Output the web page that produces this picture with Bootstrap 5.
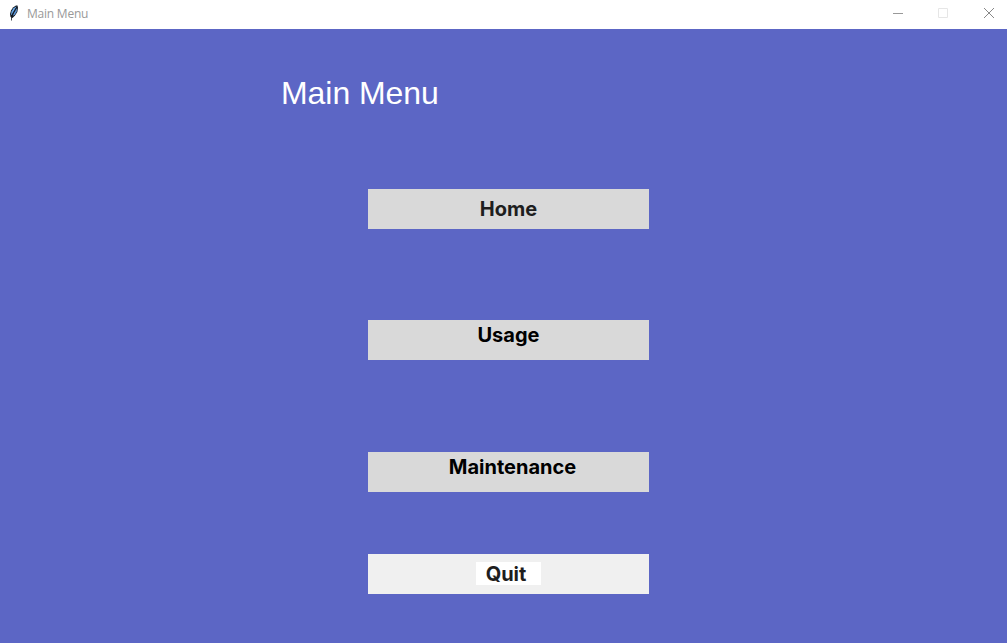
<!DOCTYPE html>
<html lang="en">
<head>
<meta charset="utf-8">
<meta name="viewport" content="width=device-width, initial-scale=1">
<title>Main Menu</title>
<link href="https://cdn.jsdelivr.net/npm/bootstrap@5.3.0/dist/css/bootstrap.min.css" rel="stylesheet">
<style>
body{background:#5c66c5}
.titlebar{height:29px;font:12px/27px "Open Sans",sans-serif;color:#999}
.titlebar .caption{letter-spacing:-.22px}
.feather{margin:5px 8px 0 9px}
.win-controls{gap:35px;padding-right:12px;padding-top:8px}
.heading{font:32px/36px "Liberation Sans",Arial,sans-serif;letter-spacing:-.05px;margin:46px 0 0 281px;color:#fff}
.menu{width:281px;margin-left:368px;margin-top:78px}
.menu .btn{height:40px;border:0;border-radius:0;background:#d9d9d9;padding:0;font:bold 20px/40px Inter,sans-serif;color:#000}
.menu .btn.raised{padding-bottom:10px;line-height:30px}
.menu .btn.wide-label{padding-left:8px}
.gap-a{margin-top:91px}.gap-b{margin-top:92px}.gap-c{margin-top:62px}
.menu .btn.home{color:#1e1e1e}
.menu .btn.quit{background:#f0f0f0;color:#1e1e1e;padding-bottom:1px}
.quit span{width:65px;height:23px;line-height:24px;padding-right:5px}
</style>
</head>
<body class="vh-100 overflow-hidden">
<header class="titlebar bg-white d-flex align-items-start">
<svg class="feather" width="10" height="16" viewBox="0 0 10 16"><path d="M1.500 12 1 9 2 5.500 4 2.500 7 .5H8.500L9 3 8.300 7 6 10.500 3.500 13Z" fill="#111820"/><path d="M2 10 2.500 6.500 4.500 3.200 7.500 1.200 6.300 4 3 9.500Z" fill="#6cabea"/><path d="M3.700 11 5.300 7.500 8.200 2.800 7.700 6.500 6 9.500Z" fill="#5d96d6"/><path d="M7 3 4 8 2.500 12 2.500 15.500" fill="none" stroke="#111820" stroke-width=".8"/></svg>
<span class="caption">Main Menu</span>
<div class="win-controls d-flex ms-auto">
<svg width="11" height="11"><path d="M1 5.500H11" stroke="#999"/></svg>
<svg width="11" height="11"><path d="M.5.5h9v9h-9z" fill="none" stroke="#e6e6e6"/></svg>
<svg width="11" height="11"><path d="M0 0l10 10M10 0L0 10" stroke="#888"/></svg>
</div>
</header>
<main>
<h1 class="heading">Main Menu</h1>
<nav class="menu d-flex flex-column">
<button class="btn home">Home</button>
<button class="btn raised gap-a">Usage</button>
<button class="btn raised wide-label gap-b">Maintenance</button>
<button class="btn quit gap-c d-flex justify-content-center align-items-center"><span class="bg-white">Quit</span></button>
</nav>
</main>
<script src="https://cdn.jsdelivr.net/npm/bootstrap@5.3.0/dist/js/bootstrap.bundle.min.js"></script>
</body>
</html>
